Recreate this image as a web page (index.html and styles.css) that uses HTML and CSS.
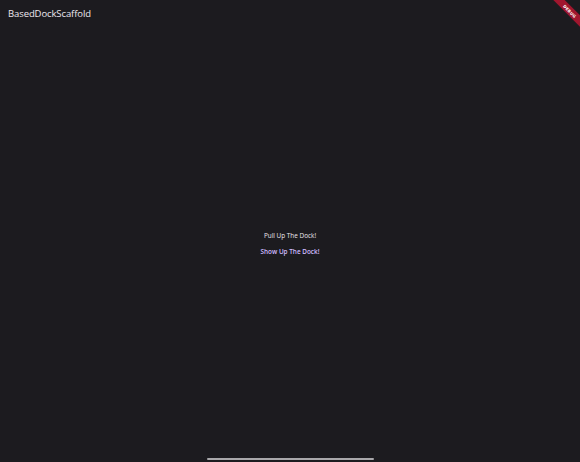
FILE: index.html
```html
<!DOCTYPE html>
<html>
<head>
<meta charset="utf-8">
<link rel="stylesheet" href="styles.css">
</head>
<body>
<div class="app">
  <header class="appbar">
    <span class="title">BasedDockScaffold</span>
  </header>
  <main class="content">
    <div class="prompt">Pull Up The Dock!</div>
    <button class="action">Show Up The Dock!</button>
  </main>
  <footer class="home">
    <div class="home-bar"></div>
  </footer>
  <div class="banner"><span>DEBUG</span></div>
</div>
</body>
</html>
```
FILE: styles.css
```css
html, body {
  margin: 0;
  padding: 0;
  background: #1c1b1f;
}
.app {
  position: relative;
  width: 580px;
  height: 462px;
  overflow: hidden;
  display: flex;
  flex-direction: column;
  font-family: "Open Sans", "Noto Sans", sans-serif;
  color: #e6e1e5;
}
.appbar {
  height: 27px;
  display: flex;
  align-items: center;
  padding-left: 8px;
}
.title {
  font-size: 9.5px;
  color: #ece8ee;
  letter-spacing: -0.1px;
}
.content {
  flex: 1;
  display: flex;
  flex-direction: column;
  align-items: center;
  justify-content: center;
  gap: 5px;
  padding-top: 7px;
}
.prompt {
  font-size: 6.4px;
  color: #ece8ee;
}
.action {
  background: none;
  border: none;
  padding: 2px 6px;
  font-family: inherit;
  font-size: 6.4px;
  font-weight: 600;
  color: #d0bcff;
}
.home {
  height: 7px;
  display: flex;
  justify-content: center;
  align-items: flex-start;
  padding-top: 3px;
  box-sizing: border-box;
}
.home-bar {
  width: 167px;
  height: 2px;
  border-radius: 1px;
  background: #a9a8ab;
}
.banner {
  position: absolute;
  top: 7px;
  right: -14px;
  width: 48px;
  height: 8px;
  background: #a0162e;
  transform: rotate(45deg);
  display: flex;
  align-items: center;
  justify-content: center;
}
.banner span {
  font-family: "DejaVu Sans", sans-serif;
  font-size: 4px;
  font-weight: bold;
  color: #ffffff;
  letter-spacing: 0.2px;
}
```
